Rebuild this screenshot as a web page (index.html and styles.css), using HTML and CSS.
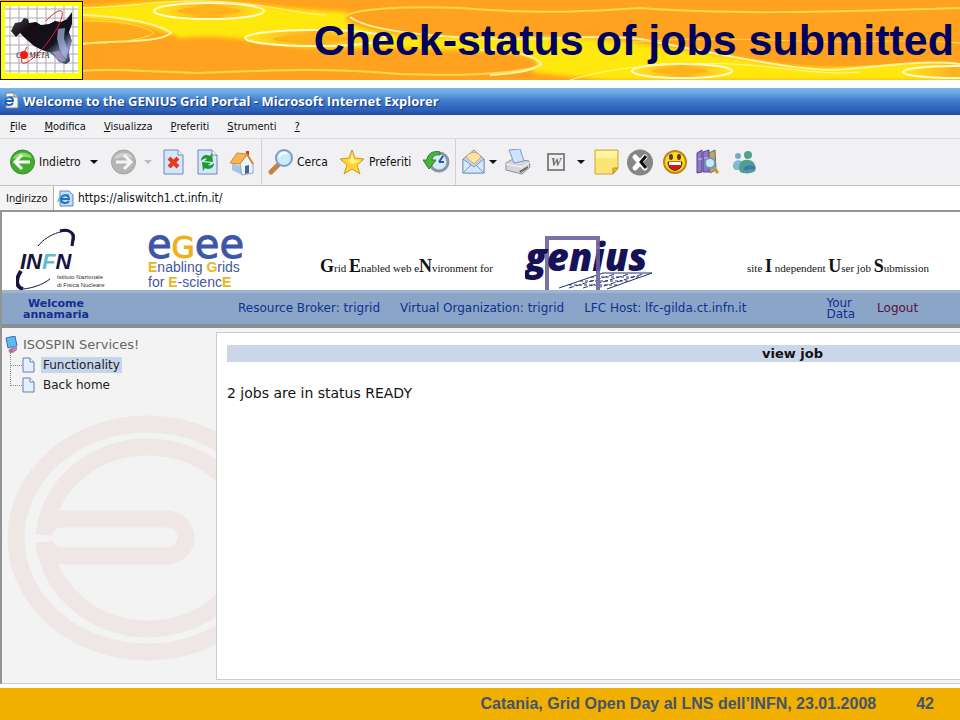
FILE: index.html
```html
<!DOCTYPE html>
<html lang="en">
<head>
  <meta charset="UTF-8">
  <meta name="viewport" content="width=device-width, initial-scale=1">
  <title>Check-status of jobs submitted</title>
  <link rel="stylesheet" href="styles.css">
</head>
<body>

  <!-- Slide header -->
  <header class="banner">
    <svg class="banner-bg" viewBox="0 0 960 80" preserveAspectRatio="none" aria-hidden="true">
      <defs>
        <filter id="soft" x="-5%" y="-20%" width="110%" height="140%"><feGaussianBlur stdDeviation="2"/></filter>
        <linearGradient id="eye"><stop offset="0" stop-color="#ffe81a"/><stop offset=".5" stop-color="#ffb01c"/><stop offset="1" stop-color="#ffe81a"/></linearGradient>
      </defs>
      <rect width="960" height="80" fill="#ffa21f"/>
      <g filter="url(#soft)">
        <path d="M60 8C110 8 130 1 190 0C240 0 275 10 350 12C338 20 350 30 420 37C470 38 530 34 580 38C620 40 650 44 700 52C760 62 800 70 850 67C890 62 930 62 960 66V80H600C570 76 545 74 530 72C548 62 530 52 490 52C430 48 380 48 330 48C270 48 240 32 180 38C160 28 120 20 60 18Z" fill="#ffe90a"/>
        <path d="M60 18C110 18 158 24 164 33C158 42 110 42 60 43Z" fill="#ffa91d"/>
      </g>
      <ellipse cx="209" cy="11" rx="55" ry="8" fill="url(#eye)" stroke="#fffbd0" stroke-width="2"/>
      <ellipse cx="209" cy="11" rx="32" ry="4" fill="#ffb31b"/>
      <ellipse cx="315" cy="38" rx="70" ry="8" fill="url(#eye)" stroke="#fffbd0" stroke-width="2"/>
      <ellipse cx="311" cy="39" rx="38" ry="4" fill="#ffb31b"/>
      <ellipse cx="682" cy="71" rx="50" ry="7" fill="url(#eye)" stroke="#fffbd0" stroke-width="2"/>
      <ellipse cx="680" cy="71" rx="28" ry="3" fill="#ffb31b"/>
      <ellipse cx="955" cy="72" rx="52" ry="6" fill="url(#eye)" stroke="#fffbd0" stroke-width="2"/>
      <path d="M350 16C362 8 410 6 460 8C530 14 580 12 640 8C720 14 800 13 960 8V62C900 60 860 70 800 64C760 58 750 52 690 46C620 34 560 35 500 36C420 36 360 26 350 16Z" fill="#ffa21f"/>
      <g fill="none" stroke="#fff3a0" stroke-width="2">
        <path d="M83 15C120 16 160 24 171 33C158 44 110 40 83 44"/>
        <path d="M83 21C120 20 145 26 154 33C144 40 110 44 83 43" stroke="#ffe23c" stroke-width="1"/>
        <path d="M83 8C130 7 160 0 205 1C260 2 290 13 326 15" stroke-width="1"/>
        <path d="M350 17C362 26 400 36 500 39C560 40 590 34 640 39C710 52 780 68 830 70C880 68 920 59 960 64"/>
        <path d="M343 18C350 8 410 6 460 8C530 14 580 12 640 8C720 14 800 13 960 8" stroke="#ffd94a"/>
        <path d="M83 71C110 68 150 72 200 73C280 70 330 68 400 74C460 76 520 74 545 64" stroke="#ffd94a"/>
        <path d="M480 50C520 50 538 58 541 64C535 70 520 73 490 75"/>
        <path d="M570 80C610 68 660 62 730 64C780 66 820 76 860 72" stroke-width="1"/>
        <path d="M610 45C650 38 730 38 800 41C850 44 910 38 960 43" stroke="#ffdf4a" stroke-width="1"/>
      </g>
    </svg>

    <svg class="logo" viewBox="0 0 83 79" role="img" aria-label="Cometa">
      <defs>
        <linearGradient id="sicily" x1="0" y1="0" x2="1" y2="1"><stop offset="0" stop-color="#555"/><stop offset=".3" stop-color="#160c12"/><stop offset=".65" stop-color="#111422"/><stop offset=".82" stop-color="#8d9ac8"/><stop offset="1" stop-color="#15172a"/></linearGradient>
      </defs>
      <rect x=".5" y=".5" width="82" height="78" fill="#ff0" stroke="#111"/>
      <rect x="5" y="5" width="73" height="67" fill="#fff"/>
      <path d="M10 5v67M19 5v67M28 5v67M37 5v67M46 5v67M55 5v67M64 5v67M73 5v67M5 8h73M5 17h73M5 26h73M5 35h73M5 44h73M5 53h73M5 62h73M5 70h73" stroke="#a9a9b4" fill="none"/>
      <path d="M11 30L15 22L21 21L24 17L28 18L29 22L36 21L41 24L49 23L55 20L61 21L67 18L72 11L72 23L69 31L72 40L69 51L70 60L66 63L59 61L51 52L42 49L34 45L26 38L20 32L16 36Z" fill="url(#sicily)"/>
      <path d="M58 28L65 27L64 38L68 50L66 59L60 49L57 38Z" fill="#a9b6dc" opacity=".7"/>
      <path d="M52 51L59 50L66 60L61 61Z" fill="#9c8fba"/>
      <text x="16" y="57" class="cometa">C</text>
      <text x="29" y="57" class="cometa">META</text>
      <path d="M46 20C56 9 64 6 62 15C60 26 46 46 32 58C22 66 17 63 27 46" fill="none" stroke="#f01818" stroke-width="1"/>
      <circle cx="24" cy="54" r="4" fill="#f21b0d"/>
    </svg>
    <h1>Check-status of jobs submitted</h1>
  </header>

  <!-- Browser window -->
  <main class="window">
    <div class="titlebar">
      <svg width="17" height="17" viewBox="0 0 17 17" aria-hidden="true">
        <path d="M4 1h8l4 4v11H4z" fill="#f8f6e8" stroke="#7c8494"/><path d="M12 1v4h4" fill="#cdd2dc" stroke="#7c8494"/>
        <path d="M3 9h8C11 4 4 4 3 9c0 5 6 5 8 2" fill="none" stroke="#1e62b8" stroke-width="2"/><path d="M1 12C1 7 8 3 12 5" fill="none" stroke="#4aa0e0"/>
      </svg>
      <span>Welcome to the GENIUS Grid Portal - Microsoft Internet Explorer</span>
    </div>

    <nav class="menubar">
      <button><u>F</u>ile</button>
      <button><u>M</u>odifica</button>
      <button><u>V</u>isualizza</button>
      <button><u>P</u>referiti</button>
      <button><u>S</u>trumenti</button>
      <button><u>?</u></button>
    </nav>

    <div class="toolbar">
      <button>
        <svg width="25" height="26" viewBox="0 0 25 26" aria-hidden="true"><circle cx="12.500" cy="13" r="12" fill="#3fae2c" stroke="#388b2b"/><path d="M3 10C5 3 18 1 22 9C15 7 8 8 3 10z" fill="#8fdc72"/><path d="M12 6L5 13l7 7M6 13h14" fill="none" stroke="#fff" stroke-width="3"/></svg>
        <span>Indietro</span>
        <i class="arrow"></i>
      </button>
      <button aria-label="Avanti">
        <svg width="25" height="26" viewBox="0 0 25 26" aria-hidden="true"><circle cx="12.500" cy="13" r="12" fill="#b5b5b5" stroke="#a2a2a2"/><path d="M3 10C5 3 18 1 22 9C15 7 8 8 3 10z" fill="#d2d2d2"/><path d="M13 6l7 7-7 7M19 13H5" fill="none" stroke="#f5f5f5" stroke-width="3"/></svg>
        <i class="arrow off"></i>
      </button>
      <button aria-label="Termina">
        <svg width="21" height="26" viewBox="0 0 21 26" aria-hidden="true"><path d="M1 1h14l5 5v19H1z" fill="#d5e5fb" stroke="#6b86bd"/><path d="M15 1v5h5" fill="#fff" stroke="#6b86bd"/><path d="M6 9l9 9M15 9l-9 9" stroke="#e8391b" stroke-width="4"/></svg>
      </button>
      <button aria-label="Aggiorna">
        <svg width="21" height="26" viewBox="0 0 21 26" aria-hidden="true"><path d="M1 1h14l5 5v19H1z" fill="#d5e5fb" stroke="#6b86bd"/><path d="M15 1v5h5" fill="#fff" stroke="#6b86bd"/><path d="M4 12C4 6 10 5 13 7l2-3 1 9-9-1 3-2c-2-1-4 0-6 2zM17 14c0 6-6 7-9 5l-2 3-1-9 9 1-3 2c2 1 4 0 6-2z" fill="#1e9a2c"/></svg>
      </button>
      <button aria-label="Pagina iniziale">
        <svg width="25" height="27" viewBox="0 0 25 27" aria-hidden="true"><path d="M17 2h3v7h-3z" fill="#d5351f"/><path d="M3 14l10 4v8L3 21z" fill="#a9c2ea"/><path d="M11 15l7-9 6 9v9l-11 2z" fill="#eef4ff" stroke="#8ea3cb"/><path d="M16 17l4-1v8l-4 1z" fill="#4b6391"/><path d="M1 14L8 4l10 1-7 10z" fill="#f7b654" stroke="#d68a2a"/><path d="M18 5l6 10" stroke="#d68a2a" stroke-width="2"/></svg>
      </button>
      <button class="sep">
        <svg width="25" height="26" viewBox="0 0 25 26" aria-hidden="true"><path d="M3 23l8-8" stroke="#c98043" stroke-width="5" stroke-linecap="round"/><circle cx="16" cy="9" r="8" fill="#c9ecfb" stroke="#7b9dcc" stroke-width="2"/><path d="M11 8c1-4 5-5 8-3" fill="none" stroke="#fff" stroke-width="2"/></svg>
        <span>Cerca</span>
      </button>
      <button>
        <svg width="26" height="26" viewBox="0 0 26 26" aria-hidden="true"><path d="M13 1l3 8 9 1-7 6 3 9-8-5-8 5 3-9-7-6 9-1z" fill="#ffd52e" stroke="#cf962a"/><path d="M13 4l2 7 6 1-8 3-4-4 3-1z" fill="#fff08a"/></svg>
        <span>Preferiti</span>
      </button>
      <button aria-label="Cronologia">
        <svg width="27" height="26" viewBox="0 0 27 26" aria-hidden="true"><circle cx="16" cy="13" r="9" fill="#d6e9f8" stroke="#8996aa" stroke-width="3"/><path d="M16 13l4-6M16 13h5" stroke="#2d5a9b" stroke-width="2"/><path d="M17 3C9 1 4 6 4 11H0l6 9 7-9H9c0-4 4-6 8-5z" fill="#48b63d" stroke="#26812b"/></svg>
      </button>
      <button class="sep" aria-label="Posta">
        <svg width="23" height="26" viewBox="0 0 23 26" aria-hidden="true"><path d="M1 10L12 1l10 9v14H1z" fill="#b9d7f5" stroke="#7d98c4"/><path d="M4 8c3-6 13-6 15 0l-7 7z" fill="#ffe3a1" stroke="#d7a55d"/><path d="M1 10l11 8 10-8v14H1z" fill="#d3e8fb" stroke="#7d98c4"/><path d="M1 24l8-8M22 24l-8-8" stroke="#7d98c4"/></svg>
        <i class="arrow"></i>
      </button>
      <button aria-label="Stampa">
        <svg width="26" height="26" viewBox="0 0 26 26" aria-hidden="true"><path d="M1 14l7-4 16 2 1 6-8 7-16-4z" fill="#d6d6d8" stroke="#8e8e92"/><path d="M4 1l11-1 4 12-10 2z" fill="#cfe3fb" stroke="#7e9cc8"/><path d="M1 15l16 3 8-5M17 18v6" fill="none" stroke="#fafafa"/><path d="M14 22l9-5v2l-7 5z" fill="#6d6d70"/></svg>
      </button>
      <button aria-label="Modifica">
        <svg width="18" height="18" viewBox="0 0 18 18" aria-hidden="true"><rect x="1" y="1" width="16" height="16" fill="#f1f1f1" stroke="#858585" stroke-width="2"/><text x="9" y="13" class="word">W</text></svg>
        <i class="arrow"></i>
      </button>
      <button aria-label="Note">
        <svg width="25" height="26" viewBox="0 0 25 26" aria-hidden="true"><path d="M1 1h23v18l-5 6H1z" fill="#fbe575" stroke="#cda738"/><path d="M2 2h21v7H2z" fill="#fff3a2"/><path d="M19 25v-6h5z" fill="#f0bb35" stroke="#b88d22"/></svg>
      </button>
      <button aria-label="Chiudi">
        <svg width="26" height="27" viewBox="0 0 26 27" aria-hidden="true"><circle cx="13" cy="13.500" r="13" fill="#858585"/><path d="M8 8l10 11M18 8L8 19" stroke="#fff" stroke-width="5" stroke-linecap="round"/><path d="M19 7l-5 6 5 6" fill="none" stroke="#111" stroke-width="3"/></svg>
      </button>
      <button aria-label="Messenger">
        <svg width="24" height="26" viewBox="0 0 24 26" aria-hidden="true"><circle cx="12" cy="13" r="11" fill="#ffdc22" stroke="#bd8817" stroke-width="2"/><path d="M5 13h14c0 11-14 11-14 0z" fill="#cf1d13" stroke="#681208"/><path d="M6 13h12v3H6z" fill="#fff"/><ellipse cx="8" cy="8" rx="2" ry="3" fill="#5b3a0d"/><ellipse cx="16" cy="8" rx="2" ry="3" fill="#5b3a0d"/></svg>
      </button>
      <button aria-label="Ricerche">
        <svg width="24" height="26" viewBox="0 0 24 26" aria-hidden="true"><path d="M1 4l5-3v22l-5 1zM7 3l6-2v22H7z" fill="#8d77c8" stroke="#544388"/><path d="M13 4l6-3 1 20-6 3z" fill="#baa777" stroke="#7a6a42"/><path d="M2 10h4M8 9h4" stroke="#d0c4f0"/><path d="M18 19l4 5" stroke="#c99638" stroke-width="3"/><circle cx="14" cy="14" r="5" fill="#c9ecfb" stroke="#6f94c0" stroke-width="2"/></svg>
      </button>
      <button aria-label="Contatti">
        <svg width="26" height="26" viewBox="0 0 26 26" aria-hidden="true"><circle cx="7" cy="7" r="3" fill="#74abc5"/><path d="M2 18c-1-8 10-9 11-2l-2 5H4z" fill="#7fb9cf"/><circle cx="17" cy="6" r="4" fill="#53a08d"/><path d="M9 23c-3-9 3-13 8-12 7 0 9 8 7 11-3 3-11 3-15 1z" fill="#4f9f8b"/><path d="M14 21c2-4 8-3 9-1" stroke="#4275bd" stroke-width="4" fill="none"/></svg>
      </button>
    </div>

    <div class="address">
      <label for="url">In<u>d</u>irizzo</label>
      <div class="url-box">
        <svg width="17" height="17" viewBox="0 0 17 17" aria-hidden="true"><path d="M3 1h9l4 4v11H3z" fill="#c5dcf8" stroke="#6284b8"/><path d="M4 9h8c0-5-7-5-8 0 0 5 6 5 8 2" fill="none" stroke="#2372bb" stroke-width="2"/><path d="M1 12C1 7 8 3 12 5" fill="none" stroke="#3190d0"/></svg>
        <input id="url" type="text" value="https://aliswitch1.ct.infn.it/">
      </div>
    </div>

    <div class="page">
      <div class="logos">
        <svg class="infn" width="96" height="62" viewBox="0 0 96 62" role="img" aria-label="INFN">
          <path d="M22 18C32 5 54-1 58 6C59 10 58 14 56 18" fill="none" stroke="#171440"/>
          <path d="M44 3C52 1 58 4 57 10L56 18" fill="none" stroke="#171440" stroke-width="3"/>
          <path d="M5 43C-1 52 0 59 7 61" fill="none" stroke="#171440" stroke-width="4"/>
          <path d="M7 61C17 60 26 57 34 51" fill="none" stroke="#171440"/>
          <text x="4" y="41" class="infn-name">IN<tspan fill="#62bccb">F</tspan>N</text>
          <text x="41" y="51" class="infn-sub">Istituto Nazionale</text>
          <text x="41" y="59" class="infn-sub">di Fisica Nucleare</text>
        </svg>
        <div class="egee">
          <svg width="96" height="26" viewBox="0 0 96 26" role="img" aria-label="eGee">
            <text x="-1" y="24" class="egee-name">e<tspan class="egee-g">G</tspan>ee</text>
          </svg>
          <p><b>E</b>nabling <b>G</b>rids</p>
          <p>for <b>E</b>-scienc<b>E</b></p>
        </div>
        <p class="motto"><b>G</b>rid <b>E</b>nabled web e<b>N</b>vironment for</p>
        <svg class="genius" width="130" height="56" viewBox="0 0 130 56" role="img" aria-label="genius">
          <g fill="none" stroke="#25306c">
            <path d="M34 54L78 39H127L82 55"/>
            <path d="M44 54L90 40M58 54L104 40M72 54L118 40" stroke-dasharray="5 2"/>
            <path d="M66 43h49M55 47h50M44 51h50" stroke-dasharray="3 2"/>
          </g>
          <rect x="22" y="4" width="51" height="60" fill="none" stroke="#7b70a8" stroke-width="4"/>
          <text x="0" y="37" class="genius-name">genius</text>
          <path d="M73 4v52" stroke="#7b70a8" stroke-width="4" opacity=".7"/>
        </svg>
        <p class="motto">site <b>I</b> ndependent <b>U</b>ser job <b>S</b>ubmission</p>
      </div>

      <div class="infobar">
        <strong>Welcome<br>annamaria</strong>
        <span>Resource Broker: trigrid</span>
        <span>Virtual Organization: trigrid</span>
        <span>LFC Host: lfc-gilda.ct.infn.it</span>
        <a href="#data">Your<br>Data</a>
        <a href="#logout" class="logout">Logout</a>
      </div>

      <div class="content">
        <aside class="sidebar">
          <svg class="watermark" width="280" height="246" viewBox="0 0 280 246" fill="none" stroke="#efe7e6" stroke-width="17" aria-hidden="true">
            <ellipse cx="140" cy="123" rx="131" ry="114"/>
            <path d="M37 120C42 70 87 32 140 32C198 32 243 73 243 123C243 173 198 214 140 214C87 214 42 175 37 127"/>
            <path d="M38 116Q42 104 56 104H158C186 104 186 141 158 141H56Q42 141 38 130"/>
          </svg>
          <div class="tree-root">
            <svg width="14" height="18" viewBox="0 0 14 18" aria-hidden="true"><path d="M1 2l9-2 2 10-9 2z" fill="#5bbcf4" stroke="#376cb3"/><path d="M6 12l6-3v5l-4 3-5-2z" fill="#a487c5"/><circle cx="6" cy="15" r="2" fill="#e05a74"/></svg>
            <span>ISOSPIN Services!</span>
          </div>
          <ul class="tree">
            <li>
              <svg width="13" height="16" viewBox="0 0 13 16" aria-hidden="true"><path d="M1 1h7l4 4v10H1z" fill="#e4f0ff" stroke="#627eae"/><path d="M8 1v4h4" fill="#fff" stroke="#627eae"/></svg>
              <a href="#functionality" class="active">Functionality</a>
            </li>
            <li>
              <svg width="13" height="16" viewBox="0 0 13 16" aria-hidden="true"><path d="M1 1h7l4 4v10H1z" fill="#e4f0ff" stroke="#627eae"/><path d="M8 1v4h4" fill="#fff" stroke="#627eae"/></svg>
              <a href="#home">Back home</a>
            </li>
          </ul>
        </aside>
        <section class="jobs">
          <h2>view job</h2>
          <p>2 jobs are in status READY</p>
        </section>
      </div>
    </div>
  </main>

  <footer>
    <span>Catania, Grid Open Day al LNS dell’INFN, 23.01.2008</span>
    <span class="num">42</span>
  </footer>

</body>
</html>
```
FILE: styles.css
```css
/* General */
* {
  box-sizing: border-box;
}
body {
  margin: 0;
  min-height: 100vh;
  display: flex;
  flex-direction: column;
  background: #fff;
  color: #111;
  font-family: "DejaVu Sans Condensed", "DejaVu Sans", sans-serif;
  font-size: 11px;
}
h1, h2, p, ul {
  margin: 0;
  padding: 0;
}
svg {
  display: block;
  flex: none;
}
button {
  border: 0;
  padding: 0;
  background: none;
  color: #111;
  font: inherit;
  text-align: left;
}
a {
  color: inherit;
  text-decoration: none;
}

/* Slide header */
.banner {
  position: relative;
  height: 80px;
  display: flex;
  align-items: center;
  justify-content: space-between;
  padding-right: 6px;
}
.banner-bg {
  position: absolute;
  left: 0;
  top: 0;
  width: 100%;
  height: 100%;
}
.logo {
  position: relative;
  width: 83px;
  height: 79px;
}
.cometa {
  font: italic 8px "Liberation Serif", serif;
  fill: #222;
}
h1 {
  position: relative;
  color: #00005e;
  font: bold 43px/48px "Liberation Sans", Arial, sans-serif;
}

/* Browser window */
.window {
  flex: 1;
  display: flex;
  flex-direction: column;
  margin: 8px 0 4px;
  overflow: hidden;
}
.titlebar {
  display: flex;
  align-items: center;
  gap: 4px;
  height: 27px;
  padding: 0 2px 2px;
  background: linear-gradient(#7cb8ec 0, #6aa5e3 20%, #3f7fcf 45%, #2b5db8 85%, #2348a0 100%);
  color: #fff;
  font: bold 13px/20px "Open Sans", sans-serif;
  text-shadow: 1px 1px 1px #173478;
  white-space: nowrap;
}
.menubar {
  display: flex;
  align-items: center;
  gap: 18px;
  height: 24px;
  padding-left: 10px;
  background: #f2f2f4;
  border-bottom: 1px solid #dcdcde;
}
.toolbar {
  display: grid;
  grid-template-columns: 101px 52px 34px 32px 32px 78px 84px 32px 50px 42px 47px 33px 36px 33px 35px 26px;
  height: 47px;
  padding-left: 10px;
  background: #f1f1f3;
  border-bottom: 1px solid #c4c4c6;
  font-size: 12px;
}
.toolbar button {
  display: flex;
  align-items: center;
  gap: 4px;
  white-space: nowrap;
}
.toolbar .sep {
  padding-left: 6px;
  border-left: 1px solid #d2d2d4;
}
.arrow {
  border: 4px solid transparent;
  border-top-color: #111;
  border-bottom: 0;
}
.toolbar span + .arrow {
  margin-left: 5px;
}
[aria-label="Modifica"] .arrow {
  margin-left: 8px;
}
.off {
  border-top-color: #bbb;
  margin-left: 4px;
}
.word {
  font: italic bold 12px "Liberation Serif", serif;
  fill: #666;
  text-anchor: middle;
}
.address {
  display: flex;
  align-items: center;
  height: 24px;
  padding-left: 6px;
  background: #f4f4f5;
}
.address label {
  width: 47px;
}
.url-box {
  flex: 1;
  display: flex;
  align-items: center;
  gap: 4px;
  height: 24px;
  padding-left: 3px;
  background: #fff;
  border-left: 1px solid #b4b4b6;
}
.url-box input {
  flex: 1;
  border: 0;
  padding: 0;
  background: none;
  color: #111;
  font: inherit;
  font-size: 12px;
  outline: none;
}

/* Portal page */
.page {
  flex: 1;
  display: flex;
  flex-direction: column;
  border-top: 2px solid #949494;
  border-left: 2px solid #949494;
}
.logos {
  display: flex;
  align-items: flex-end;
  height: 78px;
  padding-left: 14px;
  overflow: hidden;
}
.infn-name {
  font: italic bold 22px "Liberation Sans", sans-serif;
  fill: #171440;
}
.infn-sub {
  font: 6px "Liberation Sans", sans-serif;
  fill: #333;
}
.egee {
  width: 96px;
  margin-left: 36px;
  color: #4458a0;
  font: 14px/15px "Liberation Sans", sans-serif;
  white-space: nowrap;
}
.egee svg {
  overflow: visible;
}
.egee b {
  color: #e8b51c;
}
.egee-name {
  font: 40px "DejaVu Sans", sans-serif;
  fill: #3e56a6;
  stroke: #3e56a6;
}
.egee-g {
  font-size: 30px;
  fill: #f0b01c;
  stroke: #f0b01c;
}
.motto {
  font: 11px/20px "Liberation Serif", serif;
  color: #111;
  white-space: nowrap;
  padding-bottom: 12px;
}
.motto b {
  font-size: 18px;
}
.egee + .motto {
  width: 170px;
  margin-left: 76px;
}
.genius {
  margin: 0 92px 0 35px;
}
.genius-name {
  font: italic 800 38px "Open Sans", sans-serif;
  fill: #15125a;
}
.infobar {
  display: flex;
  align-items: center;
  height: 38px;
  background: #8ba5c9;
  border-top: 3px solid #9fb3cd;
  border-bottom: 4px solid #8a8e94;
  color: #10308f;
  font: 12px/11px "DejaVu Sans", sans-serif;
  white-space: nowrap;
}
.infobar strong {
  width: 108px;
  text-align: center;
  margin-right: 128px;
  font-size: 11px;
}
.infobar span {
  margin-right: 20px;
}
.infobar a {
  margin-left: 60px;
}
.infobar .logout {
  margin-left: 22px;
  color: #5a1230;
}
.content {
  flex: 1;
  display: flex;
  background: #f3f3f3;
  border-bottom: 1px solid #ccc;
}
.sidebar {
  position: relative;
  width: 214px;
  padding: 7px 0 0 3px;
  overflow: hidden;
  color: #222;
  font: 12px/20px "DejaVu Sans", sans-serif;
}
.watermark {
  position: absolute;
  left: 5px;
  top: 87px;
}
.tree-root {
  position: relative;
  display: flex;
  align-items: center;
  gap: 4px;
  color: #666;
  font-size: 13px;
}
.tree {
  position: relative;
  width: 190px;
  margin-left: 5px;
  list-style: none;
}
.tree li {
  display: flex;
  align-items: center;
  height: 20px;
}
/* dotted branch lines */
.tree li::before {
  content: "";
  width: 11px;
  height: 20px;
  margin-top: -20px;
  border-left: 1px dotted #888;
  border-bottom: 1px dotted #888;
}
.tree a {
  margin-left: 6px;
  padding: 0 2px;
  line-height: 16px;
}
.tree .active {
  background: #c6d5ec;
}
.jobs {
  flex: 1;
  margin: 4px 0 3px;
  padding: 12px 0 0 10px;
  background: #fff;
  border: 1px solid #ccc;
  border-right: 0;
  font: 14px/20px "DejaVu Sans", sans-serif;
}
.jobs h2 {
  padding-left: 73%;
  background: #cbd6ea;
  font: bold 13px/17px "DejaVu Sans", sans-serif;
}
.jobs p {
  margin-top: 21px;
}

/* Slide footer */
footer {
  display: flex;
  align-items: center;
  justify-content: flex-end;
  gap: 40px;
  height: 32px;
  padding-right: 26px;
  background: #f1af00;
  color: #44546a;
  font: bold 16px/20px "Liberation Sans", Arial, sans-serif;
}
```
